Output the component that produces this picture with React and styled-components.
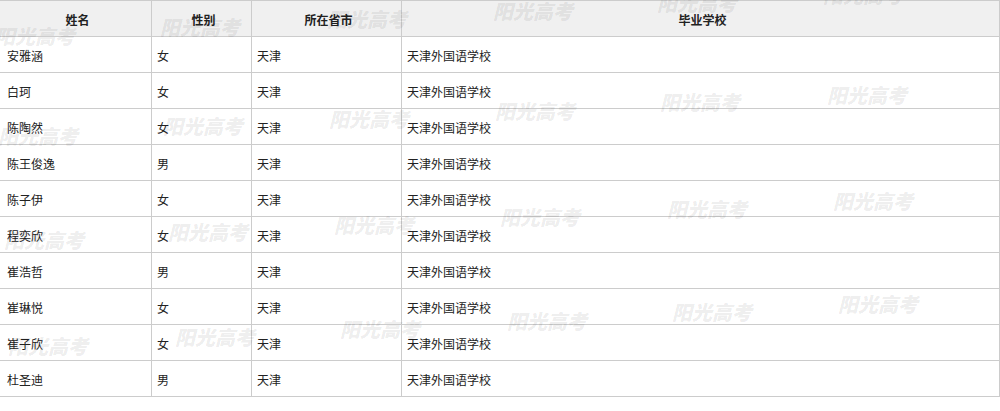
import React from "react";
import styled, { createGlobalStyle } from "styled-components";

const GlobalStyle = createGlobalStyle`
  body {
    margin: 0;
    background: #fff;
    font-family: "Noto Sans CJK SC", "Liberation Sans", sans-serif;
  }
`;

const students = [
  { name: "安雅涵", gender: "女", city: "天津", school: "天津外国语学校" },
  { name: "白珂", gender: "女", city: "天津", school: "天津外国语学校" },
  { name: "陈陶然", gender: "女", city: "天津", school: "天津外国语学校" },
  { name: "陈王俊逸", gender: "男", city: "天津", school: "天津外国语学校" },
  { name: "陈子伊", gender: "女", city: "天津", school: "天津外国语学校" },
  { name: "程奕欣", gender: "女", city: "天津", school: "天津外国语学校" },
  { name: "崔浩哲", gender: "男", city: "天津", school: "天津外国语学校" },
  { name: "崔琳悦", gender: "女", city: "天津", school: "天津外国语学校" },
  { name: "崔子欣", gender: "女", city: "天津", school: "天津外国语学校" },
  { name: "杜圣迪", gender: "男", city: "天津", school: "天津外国语学校" },
];

// watermark positions (x, top of glyphs)
const marks = [
  [-5, 27], [160, 18], [327, 10], [493, 2], [657, -6], [823, -14],
  [-2, 127], [163, 117], [329, 110], [495, 102], [660, 93], [827, 86],
  [4, 231], [168, 223], [334, 216], [500, 208], [667, 200], [833, 192],
  [8, 337], [175, 328], [340, 320], [507, 312], [672, 303], [838, 295],
];

const App = () => {
  return (
    <>
      <GlobalStyle />
      <Wrapper>
        <Table>
          <HeaderRow>
            <HeadCell>姓名</HeadCell>
            <HeadCell>性别</HeadCell>
            <HeadCell>所在省市</HeadCell>
            <HeadCell>毕业学校</HeadCell>
          </HeaderRow>
          {students.map((s) => (
            <Row key={s.name}>
              <Cell first>{s.name}</Cell>
              <Cell>{s.gender}</Cell>
              <Cell>{s.city}</Cell>
              <Cell>{s.school}</Cell>
            </Row>
          ))}
        </Table>
        <Marks>
          {marks.map(([x, y], i) => (
            <Mark key={i} style={{ left: x, top: y - 3 }}>
              阳光高考
            </Mark>
          ))}
        </Marks>
      </Wrapper>
    </>
  );
};

const Wrapper = styled.div`
  position: relative;
  width: 1000px;
  height: 411px;
  overflow: hidden;
`;

const Table = styled.div`
  display: flex;
  flex-direction: column;
  border-top: 1px solid #cccccc;
`;

const Row = styled.div`
  display: grid;
  grid-template-columns: 152px 100px 150px 598px;
  height: 36px;
`;

const HeaderRow = styled(Row)`
  background: #f0f0f0;
`;

const HeadCell = styled.div`
  display: flex;
  align-items: center;
  justify-content: center;
  padding: 2px 0 0 4px;
  border-right: 1px solid #cccccc;
  border-bottom: 1px solid #cccccc;
  font-size: 12px;
  font-weight: bold;
  color: #222;
`;

const Cell = styled.div`
  display: flex;
  align-items: center;
  padding: 2px 0 0 ${(p) => (p.first ? "7px" : "5px")};
  border-right: 1px solid #cccccc;
  border-bottom: 1px solid #cccccc;
  font-size: 12px;
  color: #222;
  white-space: nowrap;
`;

const Marks = styled.div`
  position: absolute;
  inset: 0;
  pointer-events: none;
`;

const Mark = styled.span`
  position: absolute;
  font-family: "Noto Sans CJK SC", sans-serif;
  font-size: 20px;
  line-height: 24px;
  font-weight: 900;
  font-style: italic;
  color: rgba(0, 0, 0, 0.085);
  white-space: nowrap;
`;

export default App;
